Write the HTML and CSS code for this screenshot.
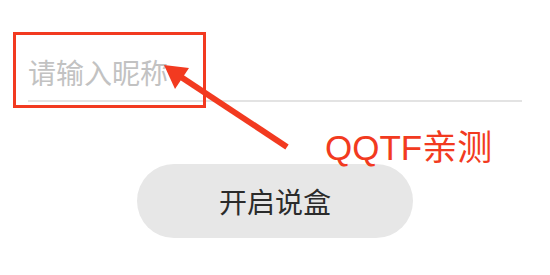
FILE: index.html
```html
<!DOCTYPE html>
<html lang="zh">
<head>
<meta charset="utf-8">
<link rel="stylesheet" href="styles.css">
</head>
<body>
<main class="page">
  <div class="field"><span class="placeholder">请输入昵称</span></div>
  <button class="btn">开启说盒</button>
</main>
<div class="annot-box"></div>
<svg class="annot-arrow" width="550" height="275" viewBox="0 0 550 275">
  <line x1="287" y1="147" x2="178" y2="75" stroke="#f23a20" stroke-width="6"/>
  <polygon points="164,65 189,68 175,89" fill="#f23a20"/>
</svg>
<div class="annot-text">QQTF亲测</div>
</body>
</html>
```
FILE: styles.css
```css
html, body {
  margin: 0;
  padding: 0;
  background: #ffffff;
}
body {
  width: 550px;
  height: 275px;
  position: relative;
  overflow: hidden;
  font-family: "Noto Sans CJK SC", "Noto Sans", sans-serif;
}
.page {
  display: flex;
  flex-direction: column;
  align-items: center;
  padding-top: 52px;
}
.field {
  align-self: stretch;
  margin: 0 28px;
  height: 40px;
  padding-bottom: 8px;
  border-bottom: 2px solid #e3e3e3;
  display: flex;
  align-items: center;
}
.placeholder {
  font-size: 28px;
  line-height: 40px;
  color: #c2c2c2;
}
.btn {
  margin-top: 62px;
  width: 276px;
  height: 74px;
  border: none;
  border-radius: 37px;
  background: #e7e7e7;
  color: #2b2b2b;
  font-family: "Noto Sans CJK SC", sans-serif;
  font-size: 28px;
  padding: 0;
}
.annot-box {
  position: absolute;
  left: 13px;
  top: 32px;
  width: 187px;
  height: 70px;
  border: 3px solid #f23a20;
}
.annot-arrow {
  position: absolute;
  left: 0;
  top: 0;
}
.annot-text {
  position: absolute;
  left: 325px;
  top: 128px;
  font-family: "Liberation Sans", "Noto Sans CJK SC", sans-serif;
  font-size: 35px;
  line-height: 40px;
  color: #f23a20;
}
```
